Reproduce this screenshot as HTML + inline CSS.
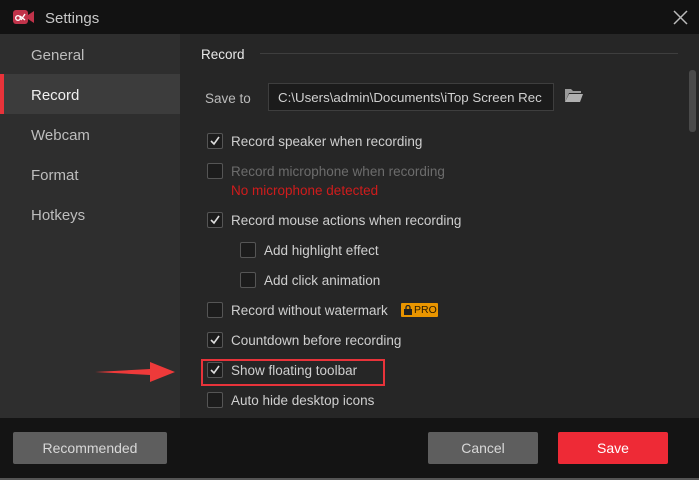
<!DOCTYPE html>
<html><head><style>
*{margin:0;padding:0;box-sizing:border-box}
body{width:699px;height:480px;background:#262626;font-family:"Liberation Sans",sans-serif;position:relative;overflow:hidden;color:#c8c8c8}
.a{position:absolute}
.title{left:0;top:0;width:699px;height:34px;background:#121212}
.side{left:0;top:34px;width:180px;height:384px;background:#2e2e2e}
.nav{left:0;width:180px;height:40px;line-height:44px;padding-left:31px;font-size:15px;color:#bdbdbd}
.foot{left:0;top:418px;width:699px;height:62px;background:#141414}
.cb{width:16px;height:16px;border:1px solid #555;background:#1c1c1c;border-radius:2px}
.lbl{font-size:13.5px;color:#cfcfcf;white-space:nowrap;margin-top:1px}
.btn{height:32px;line-height:32px;text-align:center;font-size:14px;border-radius:2px}
</style></head><body>
<div class="a title"></div>
<svg class="a" style="left:13px;top:10px" width="22" height="14" viewBox="0 0 22 14"><rect x="0" y="0" width="15" height="14" rx="3" fill="#c0334a"/><path d="M15 5 L21 1 V13 L15 9Z" fill="#c0334a"/><circle cx="5" cy="8" r="2.3" fill="none" stroke="#fff" stroke-width="1.4"/><path d="M7 6 L12 10 M8 10 L12 4" stroke="#fff" stroke-width="1.4"/></svg>
<div class="a" style="left:45px;top:10px;font-size:15px;color:#c8c8c8">Settings</div>
<svg class="a" style="left:673px;top:10px" width="15" height="15"><path d="M1 1L14 14M14 1L1 14" stroke="#bbb" stroke-width="1.5"/></svg>
<div class="a side"></div>
<div class="a nav" style="top:34px">General</div>
<div class="a nav" style="top:74px;background:#3c3c3c;color:#f0f0f0">Record</div>
<div class="a" style="left:0;top:74px;width:4px;height:40px;background:#e8333a"></div>
<div class="a nav" style="top:114px">Webcam</div>
<div class="a nav" style="top:154px">Format</div>
<div class="a nav" style="top:194px">Hotkeys</div>

<div class="a" style="left:201px;top:47px;font-size:13.5px;color:#e8e8e8">Record</div>
<div class="a" style="left:260px;top:53px;width:418px;height:1px;background:#3e3e3e"></div>
<div class="a" style="left:689px;top:70px;width:7px;height:62px;background:#4a4a4a;border-radius:3px"></div>
<div class="a lbl" style="left:205px;top:90px;color:#bbb">Save to</div>
<div class="a" style="left:268px;top:83px;width:286px;height:28px;background:#1b1b1b;border:1px solid #3e3e3e;font-size:13.3px;line-height:28px;padding-left:9px;color:#d0d0d0;overflow:hidden;white-space:nowrap">C:\Users\admin\Documents\iTop Screen Rec</div>
<svg class="a" style="left:564px;top:88px" width="19" height="15"><path d="M1 1H7L9 3H17V5H5L1 14Z" fill="#9a9a9a"/><path d="M5 6H19L16 14H1Z" fill="#b0b0b0"/></svg>

<div class="a cb" style="left:207px;top:133px"></div><svg class="a" style="left:209px;top:135px" width="12" height="12"><path d="M2 6L5 9L10 2" stroke="#ddd" stroke-width="1.6" fill="none"/></svg>
<div class="a lbl" style="left:231px;top:133px">Record speaker when recording</div>
<div class="a cb" style="left:207px;top:163px"></div>
<div class="a lbl" style="left:231px;top:163px;color:#6c6c6c">Record microphone when recording</div>
<div class="a lbl" style="left:231px;top:182px;color:#d01c1c">No microphone detected</div>
<div class="a cb" style="left:207px;top:212px"></div><svg class="a" style="left:209px;top:214px" width="12" height="12"><path d="M2 6L5 9L10 2" stroke="#ddd" stroke-width="1.6" fill="none"/></svg>
<div class="a lbl" style="left:231px;top:212px">Record mouse actions when recording</div>
<div class="a cb" style="left:240px;top:242px"></div>
<div class="a lbl" style="left:264px;top:242px">Add highlight effect</div>
<div class="a cb" style="left:240px;top:272px"></div>
<div class="a lbl" style="left:264px;top:272px">Add click animation</div>
<div class="a cb" style="left:207px;top:302px"></div>
<div class="a lbl" style="left:231px;top:302px">Record without watermark</div>
<div class="a" style="left:401px;top:303px;width:37px;height:14px;background:#e99500;border-radius:1px;font-size:10.5px;color:#2a1a00;line-height:14px;padding-left:13px">PRO</div>
<svg class="a" style="left:404px;top:305px" width="8" height="10"><rect x="0" y="4" width="8" height="6" fill="#222"/><path d="M2 4V2.5A2 2 0 0 1 6 2.5V4" stroke="#222" fill="none" stroke-width="1.3"/></svg>
<div class="a cb" style="left:207px;top:332px"></div><svg class="a" style="left:209px;top:334px" width="12" height="12"><path d="M2 6L5 9L10 2" stroke="#ddd" stroke-width="1.6" fill="none"/></svg>
<div class="a lbl" style="left:231px;top:332px">Countdown before recording</div>
<div class="a" style="left:201px;top:359px;width:184px;height:27px;border:2px solid #e8333a"></div>
<div class="a cb" style="left:207px;top:362px"></div><svg class="a" style="left:209px;top:364px" width="12" height="12"><path d="M2 6L5 9L10 2" stroke="#ddd" stroke-width="1.6" fill="none"/></svg>
<div class="a lbl" style="left:231px;top:362px">Show floating toolbar</div>
<svg class="a" style="left:95px;top:361px" width="80" height="22"><path d="M0 11L55 8L55 1L80 11L55 21L55 14Z" fill="#ee3a3a"/></svg>
<div class="a cb" style="left:207px;top:392px"></div>
<div class="a lbl" style="left:231px;top:392px">Auto hide desktop icons</div>

<div class="a foot"></div>
<div class="a btn" style="left:13px;top:432px;width:154px;background:#5e5e5e;color:#d8d8d8">Recommended</div>
<div class="a btn" style="left:428px;top:432px;width:110px;background:#5e5e5e;color:#d8d8d8">Cancel</div>
<div class="a btn" style="left:558px;top:432px;width:110px;background:#ee2a36;color:#fff">Save</div>
<div class="a" style="left:0;top:478px;width:699px;height:2px;background:#555"></div>
</body></html>
